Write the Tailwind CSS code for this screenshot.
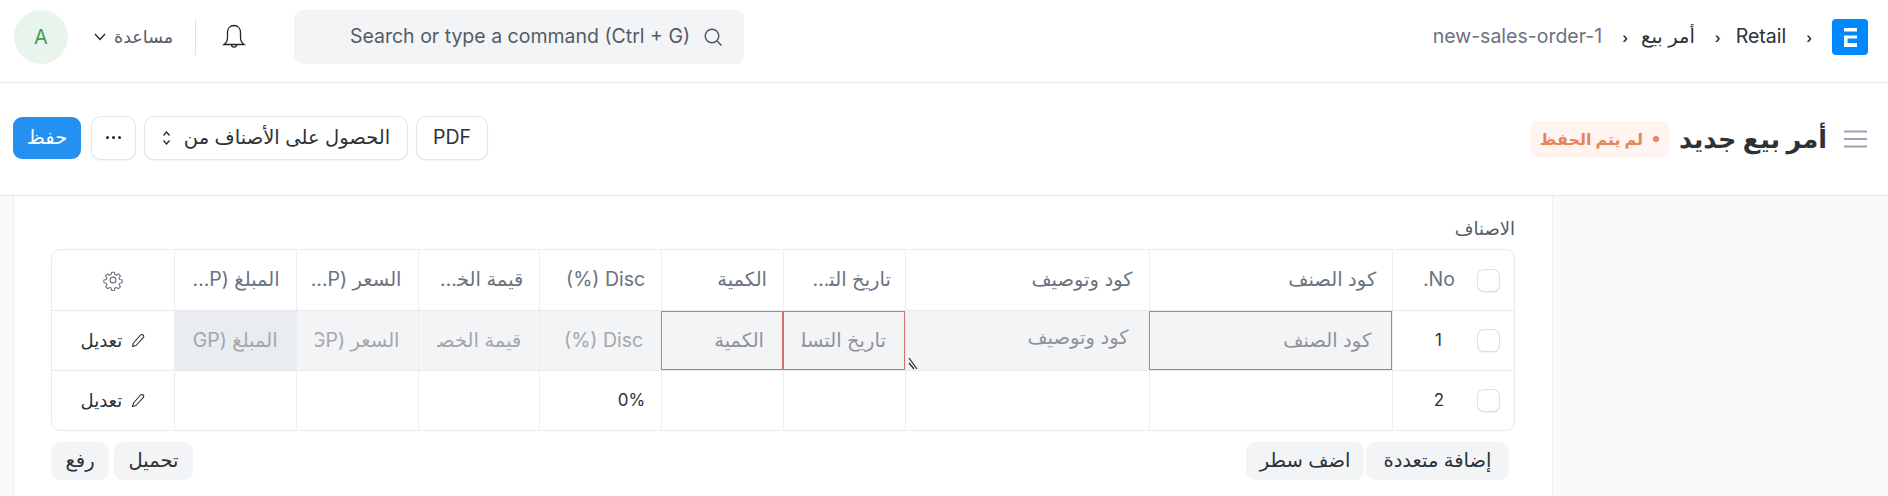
<!DOCTYPE html>
<html lang="ar" dir="rtl">
<head>
    <meta charset="UTF-8">
    <title>أمر بيع جديد</title>
    <script src="https://cdn.jsdelivr.net/npm/@tailwindcss/browser@4"></script>
</head>
<body class="h-[496px] w-[1888px] overflow-hidden bg-[#fafafa] font-['Inter','Noto_Sans','DejaVu_Sans',sans-serif] text-[#2b3238]">

    <!-- Navbar -->
    <header class="flex h-[83px] items-center justify-between border-b border-[#e8eaed] bg-white pr-[20px] pb-[8px] pl-[14px]">
        <nav class="flex items-center text-[19.500px]">
            <div class="flex h-[36px] w-[36px] items-center justify-center rounded-[4px] bg-[#0089ff]">
                <svg width="13" height="19" viewBox="0 0 13 19" fill="#fff"><path d="M0 0h13v3.500H0zM0 7.500h13v3H3.500v4.500H13V19H0z"/></svg>
            </div>
            <span class="mr-[20px] text-[14px] font-semibold">‹</span>
            <span class="mr-[20px]">Retail</span>
            <span class="mr-[15px] text-[14px] font-semibold">‹</span>
            <span class="mr-[20px]">أمر بيع</span>
            <span class="mr-[13px] text-[14px] font-semibold">‹</span>
            <span class="mr-[20px] text-[#6b7280]">new-sales-order-1</span>
        </nav>
        <div class="flex items-center">
            <div dir="ltr" class="flex h-[54px] w-[450px] items-center justify-end rounded-[9px] bg-[#f3f4f6] pr-[21px] text-[19.500px] text-[#525c66]">
                <span>Search or type a command (Ctrl + G)</span>
                <svg class="ml-[13px]" width="20" height="20" viewBox="0 0 20 20" fill="none" stroke="#4b5563" stroke-width="1.400"><circle cx="9" cy="9" r="6.800"/><path d="M14 14l4.500 4.500"/></svg>
            </div>
            <svg class="mr-[48px]" width="24" height="26" viewBox="0 0 24 26" fill="none" stroke="#1f272e" stroke-width="1.300"><path d="M12 1.500c-4.200 0-6.500 3.200-6.500 7v5c0 3.500-1.500 5.500-3.500 7h20c-2-1.500-3.500-3.500-3.500-7v-5c0-3.800-2.300-7-6.500-7z"/><path d="M9.500 20.500c0 3.500 5 3.500 5 0"/></svg>
            <div class="mr-[26px] h-[36px] w-px bg-[#e2e4e8]"></div>
            <span class="mr-[22px] text-[17.500px] text-[#525c66]">مساعدة</span>
            <svg class="mr-[8px]" width="12" height="8" viewBox="0 0 12 8" fill="none" stroke="#1f272e" stroke-width="1.300"><path d="M1 1l5 5.500L11 1"/></svg>
            <div class="mr-[26px] flex h-[54px] w-[54px] items-center justify-center rounded-full bg-[#e9f5ec] text-[20px] text-[#3d9a5b]">A</div>
        </div>
    </header>

    <!-- Page head -->
    <section class="flex h-[113px] items-center justify-between border-b border-[#e8eaed] bg-white pr-[21px] pb-[3px] pl-[13px]">
        <div class="mt-[3px] flex items-center">
            <svg width="23" height="18" viewBox="0 0 23 18" fill="none" stroke="#9ca3af" stroke-width="2.200"><path d="M0 1.500h23M0 9h23M0 16.500h23"/></svg>
            <h1 class="mr-[17px] text-[25.500px] leading-[36px] font-semibold">أمر بيع جديد</h1>
            <div class="mr-[10px] flex h-[36px] w-[139px] items-center justify-center gap-[10px] rounded-[8px] bg-[#fff4ef] text-[16px] font-semibold text-[#e8845c]">
                <span class="h-[6px] w-[6px] rounded-full bg-[#e8845c]"></span>
                <span>لم يتم الحفظ</span>
            </div>
        </div>
        <div class="flex items-center gap-[10px] text-[19.500px]">
            <button class="flex h-[42px] w-[70px] items-center justify-center rounded-[9px] bg-white shadow-[0_0_0_1px_#e5e7eb,0_1px_2px_#d5d8dc]">PDF</button>
            <button class="flex h-[42px] w-[262px] items-center justify-center gap-[13px] rounded-[9px] bg-white shadow-[0_0_0_1px_#e5e7eb,0_1px_2px_#d5d8dc]">
                <span>الحصول على الأصناف من</span>
                <svg width="9" height="16" viewBox="0 0 9 16" fill="none" stroke="#1f272e" stroke-width="1.200"><path d="M1.500 5.500l3-3.500 3 3.500M1.500 10.500l3 3.500 3-3.500"/></svg>
            </button>
            <button class="ml-[1px] flex h-[42px] w-[43px] items-center justify-center gap-[3px] rounded-[9px] bg-white shadow-[0_0_0_1px_#e5e7eb,0_1px_2px_#d5d8dc]">
                <span class="h-[3px] w-[3px] rounded-full bg-[#1f272e]"></span>
                <span class="h-[3px] w-[3px] rounded-full bg-[#1f272e]"></span>
                <span class="h-[3px] w-[3px] rounded-full bg-[#1f272e]"></span>
            </button>
            <button class="flex h-[42px] w-[68px] items-center justify-center rounded-[9px] bg-[#2490ef] font-medium text-white">حفظ</button>
        </div>
    </section>

    <!-- Form panel -->
    <main class="mr-[335px] ml-[13px] h-[300px] border-x border-[#eeeff1] bg-white px-[37px] pt-[22px]">
        <label class="block h-[22px] text-[18px] leading-[22px] text-[#525c66]">الاصناف</label>

        <!-- Items table -->
        <div class="relative mt-[9px] w-[1464px] overflow-hidden rounded-[9px] border border-[#e8eaed] text-[19.500px]">
            <div class="grid h-[60px] grid-cols-12 text-[#6b7280]">
                <div class="col-span-1 flex items-center border-l border-[#ebedf0] pr-[15px]">
                    <span class="h-[21px] w-[21px] shrink-0 rounded-[6px] bg-white shadow-[0_0_0_1px_#dcdfe3,0_1px_2px_#c8ccd1]"></span>
                    <span class="mr-[23px]">No.</span>
                </div>
                <div class="col-span-2 flex items-center border-l border-[#ebedf0] px-[16px]">كود الصنف</div>
                <div class="col-span-2 flex items-center border-l border-[#ebedf0] px-[16px]">كود وتوصيف</div>
                <div class="col-span-1 flex min-w-0 items-center border-l border-[#ebedf0] px-[14px]"><span class="truncate">تاريخ التسليم</span></div>
                <div class="col-span-1 flex min-w-0 items-center border-l border-[#ebedf0] px-[16px]"><span class="truncate">الكمية</span></div>
                <div class="col-span-1 flex min-w-0 items-center border-l border-[#ebedf0] px-[16px]"><span class="truncate">Disc (%)</span></div>
                <div class="col-span-1 flex min-w-0 items-center border-l border-[#ebedf0] px-[16px]"><span class="truncate">قيمة الخصم</span></div>
                <div class="col-span-1 flex min-w-0 items-center border-l border-[#ebedf0] pr-[16px] pl-[8px]"><span class="truncate">السعر (EGP)</span></div>
                <div class="col-span-1 flex min-w-0 items-center border-l border-[#ebedf0] px-[16px]"><span class="truncate">المبلغ (EGP)</span></div>
                <div class="col-span-1 flex items-center justify-center">
                    <svg width="22" height="22" viewBox="0 0 24 24" fill="none" stroke="#6b7280" stroke-width="1.300" stroke-linejoin="round"><path d="M10.300 2.500h3.400l.6 2.900 1.800.8 2.500-1.600 2.400 2.400-1.600 2.500.8 1.800 2.900.6v3.400l-2.900.6-.8 1.800 1.600 2.500-2.400 2.400-2.500-1.600-1.800.8-.6 2.900h-3.400l-.6-2.900-1.800-.8-2.500 1.600-2.400-2.400 1.600-2.500-.8-1.800-2.900-.6v-3.400l2.900-.6.8-1.800-1.600-2.500 2.400-2.400 2.500 1.600 1.800-.8z" transform="translate(1.200 1.200) scale(.9)"/><circle cx="12" cy="12" r="3.200"/></svg>
                </div>
            </div>

            <div class="grid h-[60px] grid-cols-12 border-t border-[#e8eaed] text-[#a3a7ae]">
                <div class="col-span-1 flex items-center border-l border-[#ebedf0] pr-[15px] text-[17px] text-[#2b3238]">
                    <span class="h-[21px] w-[21px] shrink-0 rounded-[6px] bg-white shadow-[0_0_0_1px_#dcdfe3,0_1px_2px_#c8ccd1]"></span>
                    <span class="mr-[36px]">1</span>
                </div>
                <div class="col-span-2 flex items-center border border-[#d9706e] bg-[#f3f4f6] px-[20px] text-[#8e939b]">كود الصنف</div>
                <div class="col-span-2 flex items-start border-l border-[#ebedf0] bg-[#f3f4f6] px-[20px] pt-[12px] text-[#8e939b]">كود وتوصيف</div>
                <div class="col-span-1 flex min-w-0 items-center border border-[#d9706e] bg-[#f3f4f6] px-[18px] text-[#8e939b]"><span class="block w-full overflow-hidden whitespace-nowrap">تاريخ التسليم</span></div>
                <div class="col-span-1 flex min-w-0 items-center border border-[#d9706e] bg-[#f3f4f6] px-[18px] text-[#8e939b]"><span class="block w-full overflow-hidden whitespace-nowrap">الكمية</span></div>
                <div class="col-span-1 flex min-w-0 items-center border-l border-[#ebedf0] bg-[#f3f4f6] px-[18px]"><span class="block w-full overflow-hidden whitespace-nowrap">Disc (%)</span></div>
                <div class="col-span-1 flex min-w-0 items-center border-l border-[#ebedf0] bg-[#f3f4f6] px-[18px]"><span class="block w-full overflow-hidden whitespace-nowrap">قيمة الخصم</span></div>
                <div class="col-span-1 flex min-w-0 items-center border-l border-[#ebedf0] bg-[#f3f4f6] px-[18px]"><span class="block w-full overflow-hidden whitespace-nowrap">السعر (EGP)</span></div>
                <div class="col-span-1 flex min-w-0 items-center border-l border-[#ebedf0] bg-[#e9ecf1] px-[18px]"><span class="block w-full overflow-hidden whitespace-nowrap">المبلغ (EGP)</span></div>
                <div class="col-span-1 flex items-center justify-center gap-[9px] text-[18px] text-[#2b3238]">
                    <svg width="14" height="15" viewBox="0 0 14 15" fill="none" stroke="#2b3238" stroke-width="1.100" stroke-linejoin="round"><path d="M9.500 2a1.900 1.900 0 0 1 2.700 2.700L5 12.500 1.500 13.500l1-3.500z"/></svg>
                    <span>تعديل</span>
                </div>
            </div>

            <div class="grid h-[60px] grid-cols-12 border-t border-[#e8eaed]">
                <div class="col-span-1 flex items-center border-l border-[#ebedf0] pr-[15px] text-[17px]">
                    <span class="h-[21px] w-[21px] shrink-0 rounded-[6px] bg-white shadow-[0_0_0_1px_#dcdfe3,0_1px_2px_#c8ccd1]"></span>
                    <span class="mr-[34px]">2</span>
                </div>
                <div class="col-span-2 border-l border-[#ebedf0]"></div>
                <div class="col-span-2 border-l border-[#ebedf0]"></div>
                <div class="col-span-1 border-l border-[#ebedf0]"></div>
                <div class="col-span-1 border-l border-[#ebedf0]"></div>
                <div class="col-span-1 flex items-center border-l border-[#ebedf0] px-[16px] text-[17px]"><bdi dir="ltr">0%</bdi></div>
                <div class="col-span-1 border-l border-[#ebedf0]"></div>
                <div class="col-span-1 border-l border-[#ebedf0]"></div>
                <div class="col-span-1 border-l border-[#ebedf0]"></div>
                <div class="col-span-1 flex items-center justify-center gap-[9px] text-[18px]">
                    <svg width="14" height="15" viewBox="0 0 14 15" fill="none" stroke="#2b3238" stroke-width="1.100" stroke-linejoin="round"><path d="M9.500 2a1.900 1.900 0 0 1 2.700 2.700L5 12.500 1.500 13.500l1-3.500z"/></svg>
                    <span>تعديل</span>
                </div>
            </div>

            <!-- textarea resize grip -->
            <svg class="absolute top-[107px] left-[856px]" width="12" height="13" viewBox="0 0 12 13" fill="none" stroke="#222" stroke-width="1.200"><path d="M1 1l8 11M1 6l5 6"/></svg>
        </div>

        <div class="mt-[11px] flex items-center justify-between pr-[6px]">
            <div class="flex gap-[2px] text-[19.500px]">
                <button class="h-[38px] w-[143px] rounded-[9px] bg-[#f3f4f6]">إضافة متعددة</button>
                <button class="h-[38px] w-[118px] rounded-[9px] bg-[#f3f4f6]">اضف سطر</button>
            </div>
            <div class="flex gap-[5px] text-[19.500px]">
                <button class="h-[38px] w-[79px] rounded-[9px] bg-[#f3f4f6]">تحميل</button>
                <button class="h-[38px] w-[58px] rounded-[9px] bg-[#f3f4f6]">رفع</button>
            </div>
        </div>
    </main>
</body>
</html>
